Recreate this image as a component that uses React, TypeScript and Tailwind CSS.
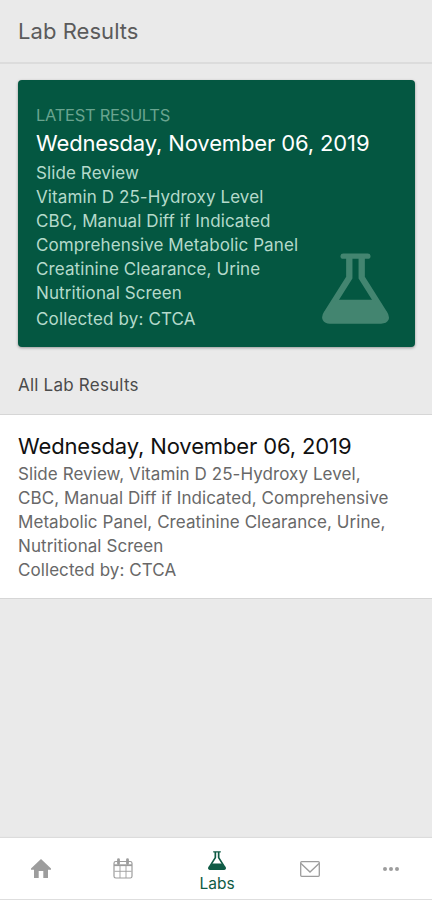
const tests = [
  "Slide Review",
  "Vitamin D 25-Hydroxy Level",
  "CBC, Manual Diff if Indicated",
  "Comprehensive Metabolic Panel",
  "Creatinine Clearance, Urine",
  "Nutritional Screen",
];

const FlaskIcon = ({ className }: { className?: string }) => (
  <svg viewBox="0 0 68 72" className={className} fill="none" stroke="currentColor">
    <path d="M21.5 3.2H46.5" strokeWidth="5.4" strokeLinecap="round" />
    <path
      d="M27.7 4V25L5 61C1.5 66 4 68.5 8 68.5H60C64.5 68.5 66.5 66 63 61L40.3 25V4"
      strokeWidth="6.4"
      strokeLinejoin="round"
    />
    <path d="M15 47.5H53L64 63C65 67 63 69 60 69H8C4 69 3 66 4 63Z" fill="currentColor" stroke="none" />
  </svg>
);

const HomeIcon = () => (
  <svg viewBox="0 0 20 19" className="h-[19px] w-5" fill="currentColor">
    <path d="M10 0 20 9.5V10.8H17V19H12.3V12H7.7V19H3V10.8H0V9.5Z" />
  </svg>
);

const CalendarIcon = () => (
  <svg viewBox="0 0 20 21" className="h-[21px] w-5" fill="none" stroke="currentColor">
    <rect x="1" y="3.5" width="18" height="16.5" rx="1.8" strokeWidth="1.2" />
    <path d="M1 7.2H19" strokeWidth="1.8" />
    <path d="M1.5 13.3H18.500M7 8V20M13 8V20" strokeWidth="0.9" />
    <path d="M5.500 1.6V5.500M14.500 1.6V5.500" strokeWidth="2.8" strokeLinecap="round" />
  </svg>
);

const MailIcon = () => (
  <svg viewBox="0 0 20 16" className="h-4 w-5" fill="none" stroke="currentColor" strokeWidth="1.3">
    <rect x="0.7" y="0.7" width="18.6" height="14.6" rx="1" />
    <path d="M1 2.5 10 11 19 2.5" />
  </svg>
);

const MoreIcon = () => (
  <svg viewBox="0 0 16 4" className="h-1 w-4" fill="currentColor">
    <circle cx="2" cy="2" r="2" />
    <circle cx="8" cy="2" r="2" />
    <circle cx="14" cy="2" r="2" />
  </svg>
);

export default function App() {
  return (
    <div className="flex h-[900px] w-[432px] flex-col overflow-hidden bg-[#eaeaea] font-[Inter,'Liberation_Sans',sans-serif]">
      {/* Header */}
      <header className="flex h-[64px] shrink-0 items-center border-b-2 border-[#dcdcdc] px-[18px]">
        <h1 className="text-[22px] leading-7 tracking-[0.05px] text-[#5b5b5b]">Lab Results</h1>
      </header>

      {/* Latest results */}
      <section className="ml-[18px] mr-[17px] mt-4 flex h-[267px] shrink-0 items-end justify-between rounded-[4px] bg-[#045741] pl-[18px] shadow-[0_1px_3px_rgba(0,0,0,0.35)]">
        <div className="h-full w-[286px] shrink-0 whitespace-nowrap pt-[23px]">
          <p className="text-[16.5px] leading-6 tracking-[-0.3px] text-[#69a48f]">LATEST RESULTS</p>
          <h2 className="text-[22px] leading-[32px] tracking-[-0.13px] text-white">Wednesday, November 06, 2019</h2>
          <ul className="mt-0.5 text-[17px] leading-6 tracking-[0.1px] text-[#b5dacb]">
            {tests.map((test) => (
              <li key={test}>{test}</li>
            ))}
          </ul>
          <p className="mt-0.5 text-[17px] leading-6 tracking-[0.15px] text-[#b5dacb]">Collected by: CTCA</p>
        </div>
        <FlaskIcon className="mb-[23px] mr-[26px] h-[71px] w-[67px] shrink-0 text-[#438570]" />
      </section>

      <h3 className="mt-[26px] shrink-0 px-[18px] text-[17px] leading-6 tracking-[0.22px] text-[#4b4b4b]">All Lab Results</h3>

      {/* Results list */}
      <section className="mt-[17px] h-[185px] shrink-0 border-y border-[#d6d6d6] bg-white px-[18px] pt-4">
        <h2 className="whitespace-nowrap text-[22px] leading-[30px] tracking-[-0.13px] text-[#111]">Wednesday, November 06, 2019</h2>
        <div className="mt-px whitespace-nowrap text-[17px] leading-6 tracking-[0.07px] text-[#686868]">
          <p>
            Slide Review, Vitamin D 25-Hydroxy Level,
            <br />
            CBC, Manual Diff if Indicated, Comprehensive
            <br />
            Metabolic Panel, Creatinine Clearance, Urine,
            <br />
            Nutritional Screen
          </p>
          <p>Collected by: CTCA</p>
        </div>
      </section>

      {/* Tab bar */}
      <nav className="mt-auto flex h-[62px] shrink-0 items-center border-b border-[#dedede] bg-white text-[#9d9d9d] shadow-[0_-1px_1px_rgba(0,0,0,0.06)]">
        <div className="flex w-[82px] justify-center"><HomeIcon /></div>
        <div className="flex w-[82px] justify-center"><CalendarIcon /></div>
        <div className="flex w-[106px] flex-col items-center pt-2 text-[#0f5b45]">
          <FlaskIcon className="h-[19px] w-[18px]" />
          <span className="mt-1 text-[15.5px] leading-5">Labs</span>
        </div>
        <div className="flex w-[80px] justify-center"><MailIcon /></div>
        <div className="flex w-[82px] justify-center"><MoreIcon /></div>
      </nav>
    </div>
  );
}
